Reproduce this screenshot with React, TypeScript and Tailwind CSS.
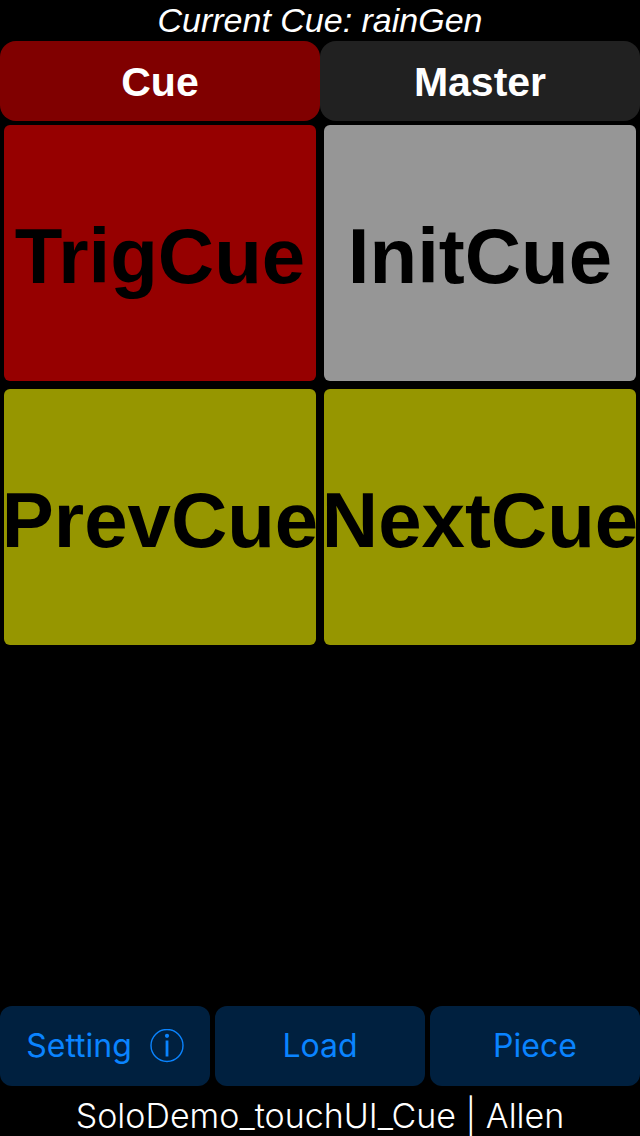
const pads = [
  { label: "TrigCue", color: "bg-[#960000]" },
  { label: "InitCue", color: "bg-[#969696]" },
  { label: "PrevCue", color: "bg-[#969600]" },
  { label: "NextCue", color: "bg-[#969600]" },
];

const tool =
  "flex h-20 flex-1 items-center justify-center rounded-xl bg-[#00203f] text-[32px] leading-10 text-[#0a84ff]";

function InfoIcon() {
  return (
    <svg className="size-[34px]" viewBox="0 0 34 34" fill="none" stroke="currentColor" aria-hidden="true">
      <circle cx="17" cy="16.5" r="16" strokeWidth="1.4" />
      <path d="M17 11.5v16" strokeWidth="2.8" />
      <circle cx="17" cy="6.8" r="2.1" fill="currentColor" stroke="none" />
    </svg>
  );
}

export default function App() {
  return (
    <div className="flex min-h-screen flex-col bg-black font-['Inter',sans-serif]">
      <header className="h-[41px] text-center font-['Liberation_Sans',sans-serif] text-[34px] leading-10 text-white italic">
        Current Cue: rainGen
      </header>
      <nav className="flex h-20 font-['Liberation_Sans',sans-serif] text-[41px] font-bold text-white">
        <button className="flex-1 rounded-2xl bg-[#800000] pt-1">Cue</button>
        <button className="flex-1 rounded-2xl bg-[#212121] pt-1">Master</button>
      </nav>
      <main className="grid grid-cols-2 gap-2 p-1 font-['Liberation_Sans',sans-serif] text-[78px] font-bold text-black">
        {pads.map((pad) => (
          <button key={pad.label} className={`flex h-64 min-w-0 items-center justify-center rounded-md pt-1.5 whitespace-nowrap ${pad.color}`}>
            {pad.label}
          </button>
        ))}
      </main>
      <footer className="mt-auto">
        <div className="flex gap-[5px]">
          <button className={`${tool} gap-[18px]`}>
            Setting
            <InfoIcon />
          </button>
          <button className={tool}>Load</button>
          <button className={tool}>Piece</button>
        </div>
        <p className="h-[50px] pt-2 text-center text-[34px] leading-[44px] font-light text-white">
          SoloDemo_touchUI_Cue | Allen
        </p>
      </footer>
    </div>
  );
}
